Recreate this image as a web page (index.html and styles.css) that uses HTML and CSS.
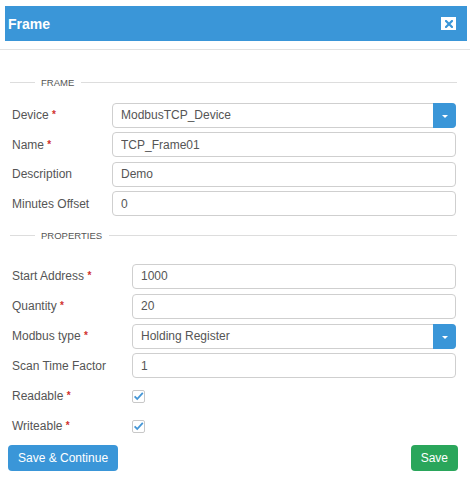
FILE: index.html
```html
<!DOCTYPE html>
<html lang="en">
<head>
    <meta charset="UTF-8">
    <meta name="viewport" content="width=device-width, initial-scale=1.0">
    <title>Frame</title>
    <link rel="stylesheet" href="styles.css">
</head>
<body>

<div class="modal">
    <div class="modal-header">
        <div class="title-bar">
            <h1>Frame</h1>
            <button class="close-btn" aria-label="Close">
                <svg width="8" height="8" viewBox="0 0 8 8"><path d="M1 1L7 7M7 1L1 7" stroke="#3a96d8" stroke-width="2.2" stroke-linecap="square"/></svg>
            </button>
        </div>
    </div>

    <div class="modal-body">
        <div class="legend legend-first"><span>FRAME</span></div>
        <div class="rows frame-rows">
            <div class="row">
                <label>Device <span class="req">*</span></label>
                <div class="field select">
                    <span class="value">ModbusTCP_Device</span>
                    <span class="caret"><i></i></span>
                </div>
            </div>
            <div class="row">
                <label>Name <span class="req">*</span></label>
                <input class="field" type="text" value="TCP_Frame01">
            </div>
            <div class="row">
                <label>Description</label>
                <input class="field" type="text" value="Demo">
            </div>
            <div class="row">
                <label>Minutes Offset</label>
                <input class="field" type="text" value="0">
            </div>
        </div>

        <div class="legend legend-props"><span>PROPERTIES</span></div>
        <div class="rows prop-rows">
            <div class="row">
                <label>Start Address <span class="req">*</span></label>
                <input class="field" type="text" value="1000">
            </div>
            <div class="row">
                <label>Quantity <span class="req">*</span></label>
                <input class="field" type="text" value="20">
            </div>
            <div class="row">
                <label>Modbus type <span class="req">*</span></label>
                <div class="field select">
                    <span class="value">Holding Register</span>
                    <span class="caret"><i></i></span>
                </div>
            </div>
            <div class="row">
                <label>Scan Time Factor</label>
                <input class="field" type="text" value="1">
            </div>
            <div class="row">
                <label>Readable <span class="req">*</span></label>
                <span class="check">
                    <svg width="13" height="13" viewBox="0 0 13 13"><rect x="0.5" y="0.5" width="12" height="12" rx="1.5" fill="#fff" stroke="#c8c8c8"/><path d="M2.6 6.4L5.2 9L10.8 2.8" fill="none" stroke="#4596d6" stroke-width="1.8"/></svg>
                </span>
            </div>
            <div class="row">
                <label>Writeable <span class="req">*</span></label>
                <span class="check">
                    <svg width="13" height="13" viewBox="0 0 13 13"><rect x="0.5" y="0.5" width="12" height="12" rx="1.5" fill="#fff" stroke="#c8c8c8"/><path d="M2.6 6.4L5.2 9L10.8 2.8" fill="none" stroke="#4596d6" stroke-width="1.8"/></svg>
                </span>
            </div>
        </div>
    </div>

    <div class="modal-footer">
        <button class="btn btn-blue">Save &amp; Continue</button>
        <button class="btn btn-green">Save</button>
    </div>
</div>

</body>
</html>
```

FILE: styles.css
```css
body {
    font-family: "Liberation Sans", Arial, sans-serif;
    font-size: 12px;
    color: #555;
    background-color: #fff;
    margin: 0;
}
.modal {
    width: 470px;
}
.modal-header {
    padding: 6px 3px 8px 5px;
    border-bottom: 1px solid #e3e3e3;
}
.title-bar {
    height: 35px;
    background-color: #3a96d8;
    display: flex;
    align-items: center;
    justify-content: space-between;
    padding: 0 11px 0 3px;
}
.title-bar h1 {
    margin: 0;
    font-size: 14px;
    font-weight: bold;
    color: #fff;
}
.close-btn {
    width: 15px;
    height: 13px;
    padding: 0;
    border: none;
    background-color: #fff;
    display: flex;
    align-items: center;
    justify-content: center;
    cursor: pointer;
}
.modal-body {
    padding: 0 13px 0 10px;
}
.legend {
    display: flex;
    align-items: center;
    gap: 6px;
    height: 12px;
    font-size: 9.5px;
    color: #555;
}
.legend::before {
    content: "";
    width: 25px;
    border-top: 1px solid #ddd;
}
.legend::after {
    content: "";
    flex: 1;
    border-top: 1px solid #ddd;
    margin-left: 1px;
}
.legend-first {
    margin-top: 26px;
    margin-bottom: 14.5px;
}
.legend-props {
    margin-top: 13.5px;
    margin-bottom: 22.3px;
}
.rows {
    display: flex;
    flex-direction: column;
    gap: 4.5px;
}
.prop-rows {
    gap: 4.9px;
}
.row {
    display: flex;
    align-items: center;
    height: 25px;
    padding-right: 1px;
}
.row label {
    flex: none;
    width: 100px;
    padding-left: 2px;
}
.prop-rows .row label {
    width: 120px;
}
.req {
    color: #d0312d;
    font-size: 10px;
    vertical-align: 1px;
    font-weight: bold;
}
.field {
    flex: 1;
    box-sizing: border-box;
    height: 25px;
    border: 1px solid #cfcfcf;
    border-radius: 4px;
    padding: 0 8px;
    font-family: inherit;
    font-size: 12px;
    color: #555;
    background-color: #fff;
    min-width: 0;
}
.field:focus {
    outline: none;
}
.select {
    display: flex;
    align-items: center;
    padding-right: 0;
}
.select .value {
    flex: 1;
}
.select .caret {
    width: 23px;
    height: 25px;
    margin: -1px -1px -1px 0;
    background-color: #3a96d8;
    border-radius: 0 4px 4px 0;
    display: flex;
    align-items: center;
    justify-content: center;
}
.select .caret i {
    width: 0;
    height: 0;
    border-left: 3px solid transparent;
    border-right: 3px solid transparent;
    border-top: 3px solid #fff;
    margin-top: 2px;
}
.check {
    display: flex;
    padding-top: 1px;
}
.modal-footer {
    display: flex;
    justify-content: space-between;
    padding: 6.5px 12px 0 8px;
}
.btn {
    height: 26px;
    padding: 0 10px;
    border: none;
    border-radius: 4px;
    color: #fff;
    font-family: inherit;
    font-size: 12px;
    cursor: pointer;
}
.btn-blue {
    background-color: #3a96d8;
}
.btn-green {
    background-color: #2aa65b;
}
```
